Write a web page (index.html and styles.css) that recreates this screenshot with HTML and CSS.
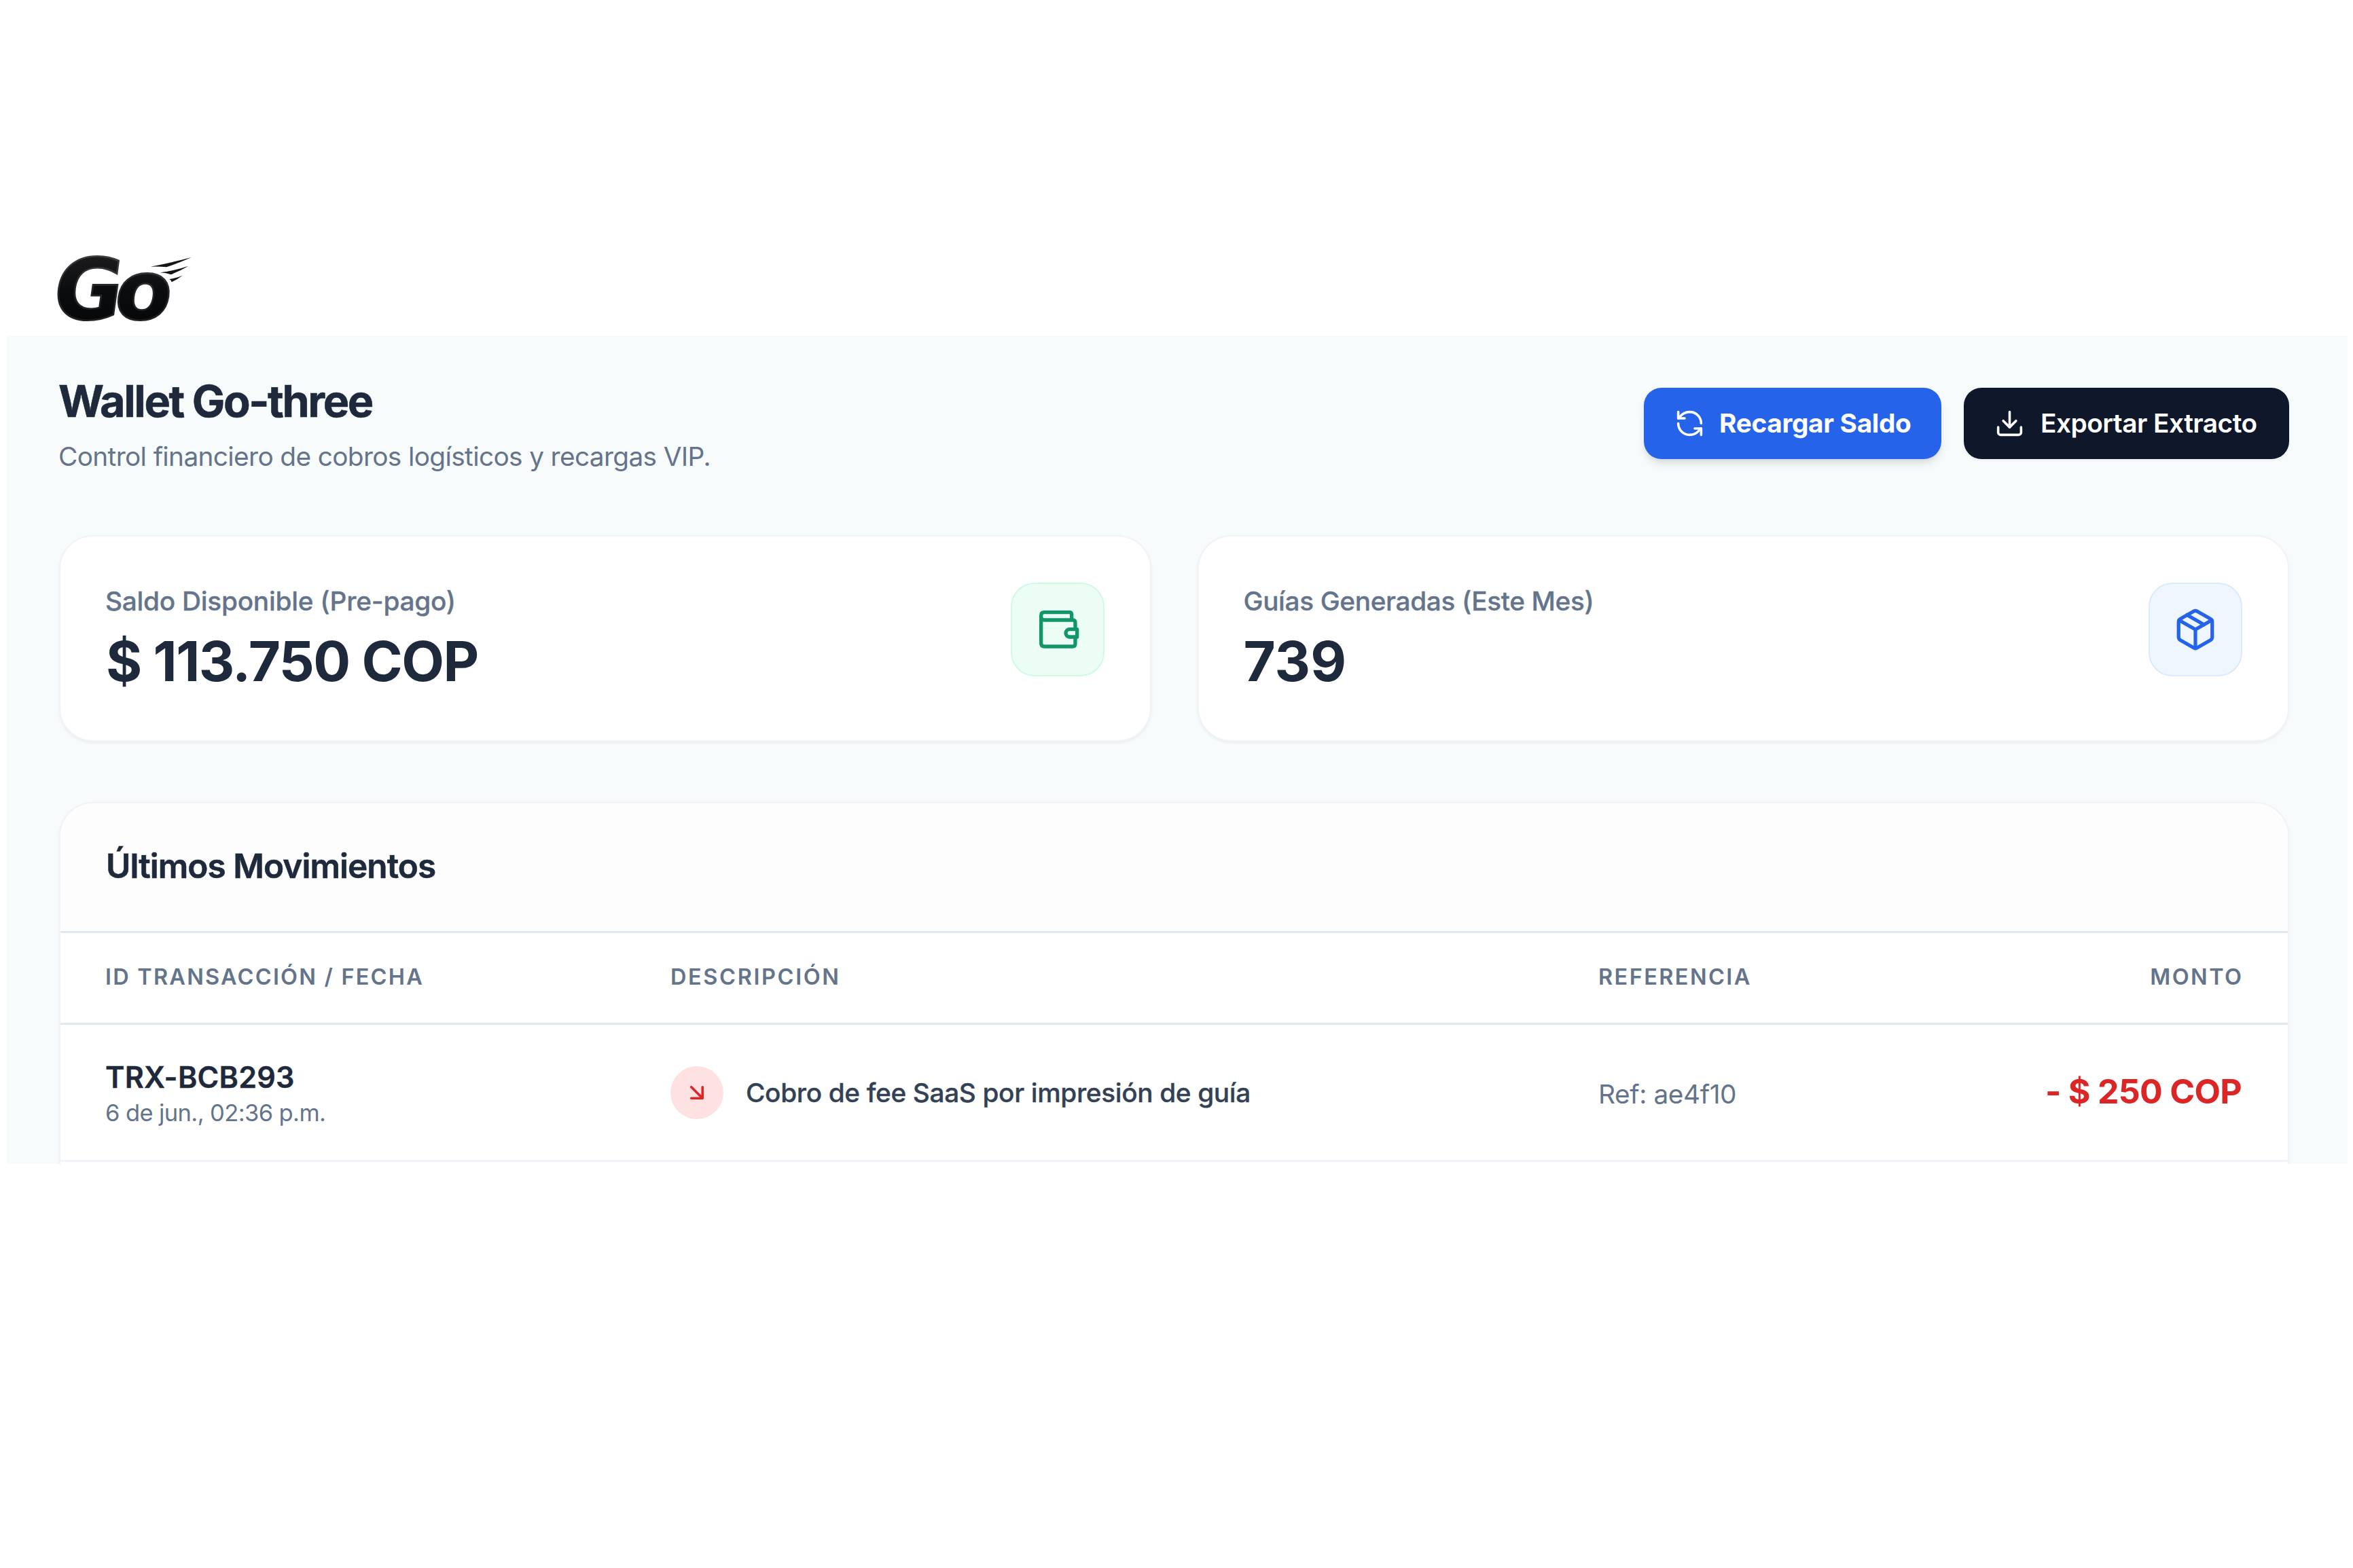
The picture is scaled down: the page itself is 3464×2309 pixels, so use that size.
FILE: index.html
```html
<!DOCTYPE html>
<html lang="es">
<head>
<meta charset="utf-8">
<title>Wallet Go-three</title>
<link rel="stylesheet" href="styles.css">
</head>
<body>
<header class="topbar">
  <svg class="logo" viewBox="240 70 620 310" role="img" aria-label="Go">
    <defs>
      <linearGradient id="ink" x1="0" y1="0" x2="0" y2="1">
        <stop offset="0" stop-color="#222225"/>
        <stop offset=".5" stop-color="#0b0c0e"/>
        <stop offset="1" stop-color="#040506"/>
      </linearGradient>
      <linearGradient id="edge" x1="0" y1="0" x2="0" y2="1">
        <stop offset="0" stop-color="#47484b"/>
        <stop offset=".5" stop-color="#242528"/>
        <stop offset="1" stop-color="#1c1e20"/>
      </linearGradient>
    </defs>
    <text class="logo-letter" transform="translate(222 362) skewX(-8) scale(.985 1)">G</text>
    <text class="logo-letter" transform="translate(494.5 362) skewX(-8) scale(.976 .967)">o</text>
    <path class="logo-wing" d="M665 129Q755 112 845 88Q790 113 735 131Q700 127 665 129Z"/>
    <path class="logo-wing" d="M708 155Q770 147 832 126Q795 148 755 164Q735 156 708 155Z"/>
    <path class="logo-wing" d="M748 184Q780 180 806 168Q782 186 758 197Q756 188 748 184Z"/>
  </svg>
</header>

<main class="panel">
  <section class="heading">
    <div>
      <h1 class="title">Wallet Go-three</h1>
      <p class="subtitle">Control financiero de cobros logísticos y recargas VIP.</p>
    </div>
    <div class="actions">
      <button class="btn btn-primary">
        <svg class="btn-icon" viewBox="0 0 24 24"><path d="M21 12a9 9 0 0 0-9-9 9.75 9.75 0 0 0-6.74 2.74L3 8"/><path d="M3 3v5h5"/><path d="M3 12a9 9 0 0 0 9 9 9.75 9.75 0 0 0 6.74-2.74L21 16"/><path d="M16 16h5v5"/></svg>
        <span>Recargar Saldo</span>
      </button>
      <button class="btn btn-dark">
        <svg class="btn-icon" viewBox="0 0 24 24"><path d="M21 15v4a2 2 0 0 1-2 2H5a2 2 0 0 1-2-2v-4"/><path d="M7 10l5 5 5-5"/><path d="M12 15V3"/></svg>
        <span>Exportar Extracto</span>
      </button>
    </div>
  </section>

  <section class="stats">
    <article class="card stat">
      <div>
        <p class="stat-label">Saldo Disponible (Pre-pago)</p>
        <p class="stat-value stat-money">$ 113.750 COP</p>
      </div>
      <div class="badge badge-green">
        <svg class="wallet" viewBox="137 136 190 190"><path d="M295 184V166Q295 156 285 156H174Q160 156 160 170V293Q160 307 174 307H299Q311 307 311 295V266M160 176Q160 190 174 190H299Q311 190 311 202V230"/><path d="M319 231H286a17 17 0 0 0 0 34H319Z"/></svg>
      </div>
    </article>
    <article class="card stat">
      <div>
        <p class="stat-label stat-label-guides">Guías Generadas (Este Mes)</p>
        <p class="stat-value">739</p>
      </div>
      <div class="badge badge-blue">
        <svg class="package" viewBox="0 0 24 24"><path d="M16.5 9.4 7.5 4.21"/><path d="M21 16V8a2 2 0 0 0-1-1.73l-7-4a2 2 0 0 0-2 0l-7 4A2 2 0 0 0 3 8v8a2 2 0 0 0 1 1.73l7 4a2 2 0 0 0 2 0l7-4A2 2 0 0 0 21 16z"/><path d="M3.27 6.96 12 12.01l8.73-5.05"/><path d="M12 22.08V12"/></svg>
      </div>
    </article>
  </section>

  <section class="card movements">
    <h2 class="movements-title"><span>Últimos Movimientos</span></h2>
    <div class="row row-head">
      <span class="head-id">ID TRANSACCIÓN / FECHA</span>
      <span class="head-desc">DESCRIPCIÓN</span>
      <span>REFERENCIA</span>
      <span class="right">MONTO</span>
    </div>
    <div class="row row-item">
      <div>
        <p class="trx">TRX-BCB293</p>
        <p class="date">6 de jun., 02:36 p.m.</p>
      </div>
      <div class="desc">
        <span class="dot"><svg class="arrow" viewBox="0 0 24 24"><path d="M3 3l18 18M21 3v18H3"/></svg></span>
        <span>Cobro de fee SaaS por impresión de guía</span>
      </div>
      <span class="ref">Ref: ae4f10</span>
      <span class="amount right">- $ 250 COP</span>
    </div>
    <div class="row-next"></div>
  </section>
</main>
</body>
</html>
```
FILE: styles.css
```css
* { box-sizing: border-box; margin: 0; padding: 0; }
html, body { height: 100%; }
body {
  background: #fff;
  font-family: Inter, "Liberation Sans", sans-serif;
  color: #1e293b;
  overflow: hidden;
}
svg { display: block; overflow: visible; fill: none; stroke: currentColor; stroke-linecap: round; stroke-linejoin: round; flex: none; }

/* Brand bar */
.topbar { height: 494px; padding: 373px 0 0 80px; }
.logo { width: 206.7px; height: 103.3px; stroke: none; }
.logo-letter {
  font-family: "DejaVu Sans", sans-serif;
  font-weight: 700;
  font-size: 375px;
  fill: url(#ink);
  stroke: url(#edge);
  stroke-width: 8px;
  stroke-linejoin: miter;
}
.logo-wing { fill: #141517; }

/* Page surface */
.panel {
  margin: 0 8px 0 10px;
  height: 1220px;
  padding: 61px 86px 0 77px;
  background: #f8fbfc;
  overflow: hidden;
}
.heading { display: flex; justify-content: space-between; align-items: flex-start; height: 233px; }
.title { margin-left: -1px; font-size: 64.7px; line-height: 72px; font-weight: 700; letter-spacing: -2.4px; white-space: nowrap; -webkit-text-stroke: .6px currentColor; }
.subtitle { margin: 16px 0 0 -1px; font-size: 38.8px; line-height: 58px; color: #64748b; letter-spacing: -.64px; white-space: nowrap; }
.actions { display: flex; gap: 33px; margin-top: 16px; }
.btn {
  display: flex;
  align-items: center;
  height: 105px;
  border: 0;
  border-radius: 26px;
  padding: 0 0 1px 45px;
  gap: 21px;
  font: 600 38.8px/56px Inter, sans-serif;
  color: #fff;
  white-space: nowrap;
}
.btn-primary { width: 438px; background: #2563eb; font-weight: 700; letter-spacing: -.35px; box-shadow: 0 9px 13px -2px rgba(0,0,0,.1), 0 4px 9px -4px rgba(0,0,0,.1); }
.btn-dark { width: 479px; gap: 23px; background: #0f172a; letter-spacing: -.53px; box-shadow: 0 2px 4px rgba(0,0,0,.05); }
.btn-icon { width: 45px; height: 45px; stroke-width: 1.9; }

/* Cards */
.card { background: #fff; border: 2px solid #f1f3f8; border-radius: 50px; box-shadow: 0 2px 4px rgba(15,23,42,.06); }
.stats { display: grid; grid-template-columns: 1fr 1fr; gap: 68px; }
.stat { height: 304px; display: flex; justify-content: space-between; align-items: flex-start; padding: 67px 67px 0 66px; }
.stat-label { font-size: 38.8px; line-height: 56px; font-weight: 500; color: #64748b; letter-spacing: -.26px; white-space: nowrap; -webkit-text-stroke: .3px currentColor; }
.stat-label-guides { letter-spacing: -.37px; }
.stat-value { margin-top: 19px; font-size: 81.5px; line-height: 84px; font-weight: 700; white-space: nowrap; }
.stat-money { margin-left: 1px; letter-spacing: -1.55px; }
.badge { width: 138px; height: 138px; margin-top: 1px; border: 2px solid; border-radius: 35px; display: flex; align-items: center; justify-content: center; flex: none; }
.badge-green { background: #ecfdf5; border-color: #d1fae5; color: #109669; }
.badge-blue { background: #eff6ff; border-color: #dbeafe; color: #2563eb; }
.wallet { width: 63.3px; height: 63.3px; stroke-width: 16; }
.package { width: 66px; height: 66px; stroke-width: 1.9; }

/* Transactions table */
.movements { margin-top: 89px; height: 700px; overflow: hidden; }
.movements-title {
  height: 191px;
  padding: 62px 68px 0 67px;
  background: #fdfdfe;
  border-bottom: 3px solid #e2e8f0;
  font-size: 49.5px;
  line-height: 60px;
  font-weight: 600;
  letter-spacing: -.95px;
  -webkit-text-stroke: .6px currentColor;
}
.row { display: grid; grid-template-columns: 832px 1366px 300px 1fr; align-items: center; padding: 0 68px 0 66px; white-space: nowrap; }
.right { text-align: right; }
.row-head { height: 135px; padding-bottom: 3px; border-bottom: 3px solid #e2e8f0; font-size: 32.5px; font-weight: 600; color: #64748b; letter-spacing: 2.4px; }
.row-head .right { margin-right: -2.4px; }
.head-id { letter-spacing: 2.2px; }
.head-desc { letter-spacing: 2.6px; }
.row-item { height: 202px; border-bottom: 3px solid #f1f5f9; }
.trx { font-size: 43.1px; line-height: 60px; font-weight: 600; letter-spacing: .23px; -webkit-text-stroke: .4px currentColor; }
.date { font-size: 34.5px; line-height: 46px; color: #64748b; letter-spacing: -.61px; }
.desc { display: flex; align-items: center; gap: 33px; font-size: 38.8px; font-weight: 500; color: #334155; letter-spacing: -.37px; -webkit-text-stroke: .3px currentColor; }
.dot { width: 78px; height: 78px; border-radius: 50%; background: #fee2e2; color: #dc2626; display: flex; align-items: center; justify-content: center; }
.arrow { width: 22px; height: 22px; stroke-width: 4; }
.ref { font-size: 38.8px; color: #64748b; letter-spacing: -.4px; padding-top: 4px; }
.amount { font-size: 50px; font-weight: 700; color: #dc2626; letter-spacing: -.7px; padding-bottom: 3px; }
.row-next { height: 200px; }
```
